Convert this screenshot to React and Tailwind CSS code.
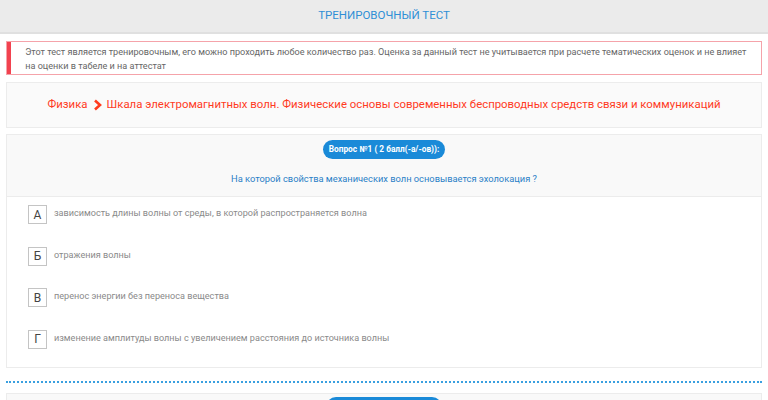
export default function App() {
  const options = [
    { letter: 'А', text: 'зависимость длины волны от среды, в которой распространяется волна' },
    { letter: 'Б', text: 'отражения волны' },
    { letter: 'В', text: 'перенос энергии без переноса вещества' },
    { letter: 'Г', text: 'изменение амплитуды волны с увеличением расстояния до источника волны' },
  ];

  return (
    <div className="w-[768px] h-[400px] overflow-hidden bg-white font-['Roboto',sans-serif]">
      <div className="h-[34px] bg-[#ebebeb] border-b-2 border-[#e0e0e0] flex items-center justify-center">
        <span className="text-[11.5px] text-[#2f8fd6]">ТРЕНИРОВОЧНЫЙ ТЕСТ</span>
      </div>

      <div className="px-[6px] pt-[7px]">
        <div className="flex h-[34px] border border-[#f5a3aa] bg-white">
          <div className="w-[5px] bg-[#f2424f]" />
          <p className="pl-[14px] pr-[10px] pt-[3px] text-[9.1px] leading-[14px] text-[#666]">
            Этот тест является тренировочным, его можно проходить любое количество раз. Оценка за данный тест не учитывается при расчете тематических оценок и не влияет на оценки в табеле и на аттестат
          </p>
        </div>

        <div className="mt-[7px] h-[46px] border border-[#ececec] bg-[#fafafa] flex items-center justify-center">
          <span className="text-[11.4px] text-[#ff3b1f] flex items-center gap-[5px]">
            Физика
            <svg width="9" height="12" viewBox="0 0 9 12">
              <path d="M2 1.5 L7 6 L2 10.5" fill="none" stroke="#ff3b1f" strokeWidth="2.6" />
            </svg>
            Шкала электромагнитных волн. Физические основы современных беспроводных средств связи и коммуникаций
          </span>
        </div>

        <div className="mt-[6px] border border-[#ececec]">
          <div className="h-[62px] bg-[#f9f9f9] border-b border-[#ececec] flex flex-col items-center">
            <span className="mt-[5px] h-[19px] px-[6px] rounded-full bg-[#1a8ad8] text-white text-[8.3px] font-bold flex items-center">
              Вопрос №1 ( 2 балл(-а/-ов)):
            </span>
            <span className="mt-[13px] text-[9.3px] text-[#2a7fc7]">
              На которой свойства механических волн основывается эхолокация ?
            </span>
          </div>
          <div className="pb-[4px]">
            {options.map((o) => (
              <div key={o.letter} className="h-[41.5px] flex items-start pt-[8px] pl-[21px]">
                <div className="w-[19px] h-[19px] border border-[#c4c4c4] flex items-center justify-center text-[12px] text-[#444] leading-none">
                  {o.letter}
                </div>
                <span className="ml-[7px] mt-[2px] text-[9.1px] text-[#8a8a8a]">{o.text}</span>
              </div>
            ))}
          </div>
        </div>

        <div className="mt-[13px] border-t-2 border-dotted border-[#3aa0e0]" />

        <div className="mt-[10px] h-[20px] border border-[#ececec] bg-[#f9f9f9] flex justify-center">
          <div className="mt-[3px] w-[116px] h-[20px] rounded-full bg-[#1a8ad8]" />
        </div>
      </div>
    </div>
  );
}
